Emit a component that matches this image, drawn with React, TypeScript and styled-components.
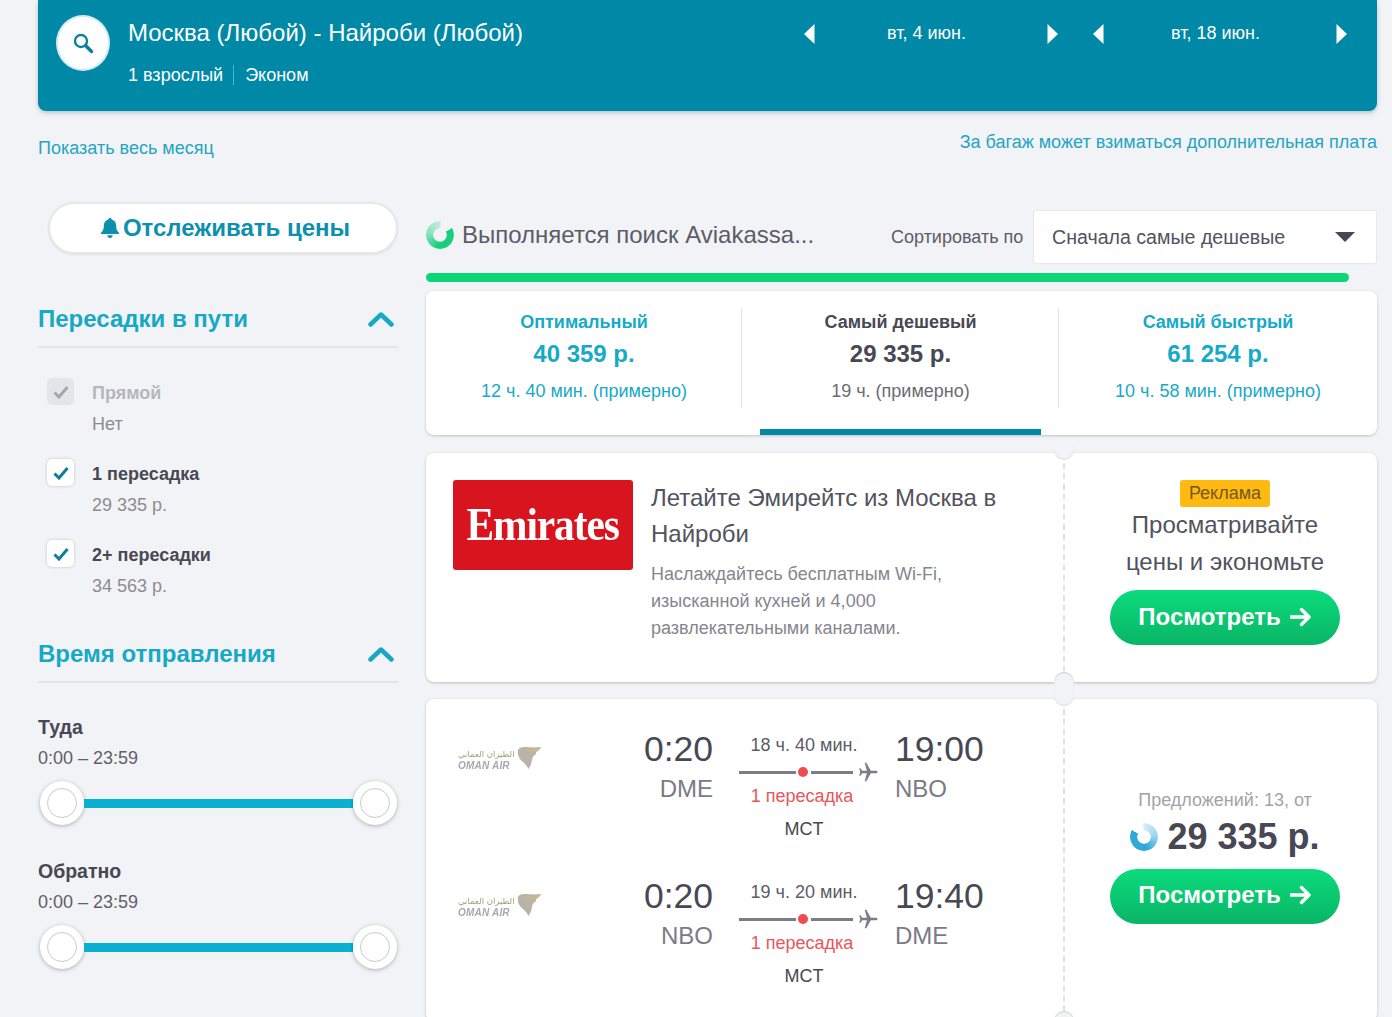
import React from 'react'
import styled, {createGlobalStyle} from 'styled-components'

const GlobalStyle = createGlobalStyle`
    html, body {
        margin: 0;
        padding: 0;
        background: #f2f3f6;
    }
    * {
        box-sizing: border-box;
    }
`

const Page = styled.div`
    width: 1392px;
    height: 1017px;
    overflow: hidden;
    padding: 0 15px 0 38px;
    font-family: 'Liberation Sans', Arial, sans-serif;
    color: #474853;
    background: #f2f3f6;
`

const Header = styled.header`
    height: 111px;
    display: flex;
    justify-content: space-between;
    padding: 15px 30px 0 18px;
    background: #0089a7;
    border-radius: 0 0 8px 8px;
    box-shadow: 0 2px 4px rgba(0, 60, 80, 0.25);
    color: #fff;
`

const RouteBox = styled.div`
    display: flex;
    gap: 18px;
`

const SearchCircle = styled.div`
    width: 54px;
    height: 56px;
    display: flex;
    align-items: center;
    justify-content: center;
    background: #fff;
    border: 2px solid #d5eaf0;
    border-radius: 50%;
`

const RouteTitle = styled.div`
    font-size: 24px;
    line-height: 36px;
`

const RouteMeta = styled.div`
    display: flex;
    align-items: center;
    margin-top: 14px;
    font-size: 18px;
    line-height: 20px;
`

const MetaPart = styled.span`
    & + & {
        margin-left: 10px;
        padding-left: 11px;
        border-left: 1px solid #4db3c9;
    }
`

const DatesBox = styled.div`
    display: flex;
    gap: 35px;
    height: 38px;
`

const DateNav = styled.div`
    width: 254px;
    display: flex;
    align-items: center;
    justify-content: space-between;
    font-size: 18px;
`

const DateText = styled.span`
    margin: -2px 9px 0 0;
`

const Links = styled.div`
    height: 91px;
    display: flex;
    justify-content: space-between;
    font-size: 18px;
    color: #24a5c2;
`

const MonthLink = styled.a`
    margin-top: 27px;
    line-height: 20px;
`

const BaggageLink = styled.a`
    margin-top: 21px;
    line-height: 20px;
`

const Columns = styled.div`
    display: flex;
    gap: 28px;
`

const Sidebar = styled.aside`
    width: 360px;
    flex-shrink: 0;
`

const TrackButton = styled.button`
    width: 350px;
    height: 52px;
    margin-left: 10px;
    display: flex;
    align-items: center;
    justify-content: center;
    gap: 3px;
    padding: 0 0 0 4px;
    background: #fff;
    border: 2px solid #e6e7eb;
    border-radius: 26px;
    box-shadow: 0 1px 2px rgba(0, 0, 0, 0.08);
    font: bold 24px 'Liberation Sans', Arial, sans-serif;
    color: #0d90ae;
`

const FilterHead = styled.div<{$top: number}>`
    height: 51px;
    margin-top: ${(p) => p.$top}px;
    display: flex;
    align-items: center;
    justify-content: space-between;
    padding: 0 4px 5px 0;
    border-bottom: 2px solid #e3e4e9;
    font-size: 24px;
    font-weight: bold;
    color: #17a8c6;
`

const StopList = styled.div`
    display: flex;
    flex-direction: column;
    gap: 25px;
    margin-top: 30px;
    padding-left: 9px;
`

const StopRow = styled.div`
    display: flex;
    gap: 18px;
`

const CheckBox = styled.div<{$off?: boolean}>`
    width: 27px;
    height: 27px;
    flex-shrink: 0;
    display: flex;
    align-items: center;
    justify-content: center;
    background: ${(p) => (p.$off ? '#e4e5e9' : '#fff')};
    border-radius: 5px;
    box-shadow: ${(p) => (p.$off ? 'none' : '0 0 3px rgba(0, 0, 0, 0.22)')};
`

const StopText = styled.div`
    display: flex;
    flex-direction: column;
    gap: 11px;
    font-size: 18px;
    line-height: 20px;
    padding-top: 5px;
`

const StopName = styled.span<{$off?: boolean}>`
    font-weight: bold;
    color: ${(p) => (p.$off ? '#b6b7bc' : '#474853')};
`

const StopPrice = styled.span`
    color: #8b8c93;
`

const TimeList = styled.div`
    margin-top: 32px;
    display: flex;
    flex-direction: column;
    gap: 32px;
`

const TimeName = styled.div`
    font-size: 19.5px;
    line-height: 24px;
    font-weight: bold;
`

const TimeRange = styled.div`
    margin-top: 7px;
    font-size: 18px;
    line-height: 24px;
    color: #5f6069;
`

const Slider = styled.div`
    display: flex;
    align-items: center;
    height: 48px;
    margin-top: 9px;
    padding: 0 1px 0 2px;
`

const Thumb = styled.div`
    width: 44px;
    height: 44px;
    flex-shrink: 0;
    display: flex;
    align-items: center;
    justify-content: center;
    background: #fff;
    border-radius: 50%;
    box-shadow: 0 1px 4px rgba(0, 0, 0, 0.28);
`

const ThumbInner = styled.div`
    width: 30px;
    height: 30px;
    border: 1px solid #c9cacd;
    border-radius: 50%;
`

const SliderBar = styled.div`
    flex: 1;
    height: 9px;
    background: #0ab0d3;
`

const Main = styled.main`
    width: 951px;
    padding-top: 8px;
`

const SearchRow = styled.div`
    height: 54px;
    display: flex;
    align-items: center;
`

const SearchStatus = styled.div`
    width: 465px;
    display: flex;
    align-items: center;
    gap: 8px;
    margin-bottom: 4px;
`

const Spinner = styled.div<{$color: string; $flip?: boolean}>`
    width: 28px;
    height: 28px;
    flex-shrink: 0;
    border-radius: 50%;
    background: conic-gradient(from 60deg, ${(p) => p.$color} 0deg, ${(p) => p.$color} 130deg, ${(p) => p.$color}77 220deg, ${(p) => p.$color}33 300deg, transparent 306deg);
    -webkit-mask: radial-gradient(circle, transparent 32%, #000 36%);
    mask: radial-gradient(circle, transparent 32%, #000 36%);
    transform: ${(p) => (p.$flip ? 'scaleX(-1)' : 'none')};
`

const SearchText = styled.div`
    font-size: 24px;
    color: #5b5c66;
    white-space: nowrap;
`

const SortLabel = styled.div`
    width: 143px;
    font-size: 18px;
    color: #5b5c66;
`

const SortSelect = styled.div`
    width: 342px;
    height: 52px;
    display: flex;
    align-items: center;
    justify-content: space-between;
    padding: 0 21px 0 18px;
    background: #fff;
    border-radius: 2px;
    box-shadow: 0 0 2px rgba(0, 0, 0, 0.15);
    font-size: 19.6px;
    color: #52535d;
`

const SortArrow = styled.div`
    width: 0;
    height: 0;
    border-left: 10px solid transparent;
    border-right: 10px solid transparent;
    border-top: 10px solid #474853;
`

const Progress = styled.div`
    width: 923px;
    height: 9px;
    margin-top: 9px;
    background: #0cd677;
    border-radius: 5px;
`

const Tabs = styled.div`
    height: 144px;
    margin-top: 9px;
    display: grid;
    grid-template-columns: 316px 317px 318px;
    background: #fff;
    border-radius: 8px;
    box-shadow: 0 1px 3px rgba(0, 0, 0, 0.2);
`

const Tab = styled.div<{$active?: boolean}>`
    position: relative;
    height: 144px;
    padding-top: 21px;
    text-align: center;
    color: ${(p) => (p.$active ? '#474853' : '#16a9c8')};
    &:not(:first-child)::before {
        content: '';
        position: absolute;
        left: -1px;
        top: 17px;
        height: 100px;
        border-left: 1px solid #e4e5e9;
    }
    ${(p) =>
        p.$active &&
        `&::after {
        content: '';
        position: absolute;
        left: 18px;
        right: 18px;
        bottom: 0;
        height: 6px;
        background: #0089a7;
    }`}
`

const TabTitle = styled.div`
    font-size: 18px;
    line-height: 20px;
    font-weight: bold;
`

const TabPrice = styled.div`
    margin-top: 4px;
    font-size: 24px;
    line-height: 36px;
    font-weight: bold;
`

const TabTime = styled.div<{$active?: boolean}>`
    margin-top: 9px;
    font-size: 18px;
    line-height: 20px;
    color: ${(p) => (p.$active ? '#6a6b74' : '#16a9c8')};
`

const Card = styled.section<{$height: number; $top: number}>`
    position: relative;
    height: ${(p) => p.$height}px;
    margin-top: ${(p) => p.$top}px;
    display: grid;
    grid-template-columns: 637px 314px;
    background: #fff;
    border-radius: 8px;
    box-shadow: 0 1px 3px rgba(0, 0, 0, 0.22);
`

const Notch = styled.div<{$bottom?: boolean}>`
    position: absolute;
    left: 628px;
    ${(p) => (p.$bottom ? 'bottom: -10px;' : 'top: -13px;')}
    width: 20px;
    height: 20px;
    background: #f2f3f6;
    border-radius: 50%;
    box-shadow: ${(p) => (p.$bottom ? 'inset 0 1px 1px rgba(0, 0, 0, 0.16)' : 'inset 0 -1px 1px rgba(0, 0, 0, 0.1)')};
`

const AdLeft = styled.div`
    display: flex;
    gap: 18px;
    padding: 27px 40px 0 27px;
`

const EmiratesLogo = styled.div`
    width: 180px;
    height: 90px;
    flex-shrink: 0;
    display: flex;
    align-items: center;
    justify-content: center;
    padding-bottom: 2px;
    background: #d8141f;
    border-radius: 3px;
    color: #fff;
    font: bold 46px 'Liberation Serif', 'Times New Roman', serif;
    letter-spacing: -1.2px;
`

const EmiratesWord = styled.span`
    display: block;
    transform: scaleX(0.9);
`

const AdTitle = styled.div`
    font-size: 24px;
    line-height: 36px;
    color: #52535d;
`

const AdDesc = styled.div`
    margin-top: 9px;
    font-size: 18px;
    line-height: 27px;
    color: #85868d;
`

const Side = styled.div<{$center?: boolean}>`
    display: flex;
    flex-direction: column;
    align-items: center;
    justify-content: ${(p) => (p.$center ? 'center' : 'flex-start')};
    padding: ${(p) => (p.$center ? '0 0 8px 8px' : '27px 0 0 8px')};
    border-left: 2px dashed #e0e1e6;
`

const AdBadge = styled.div`
    width: 90px;
    height: 27px;
    display: flex;
    align-items: center;
    justify-content: center;
    background: #ffb911;
    border-radius: 3px;
    font-size: 18px;
    color: #74591a;
`

const AdSlogan = styled.div`
    margin-top: -1px;
    font-size: 24px;
    line-height: 37px;
    text-align: center;
    color: #52535d;
`

const GoButton = styled.button<{$top: number}>`
    width: 230px;
    height: 55px;
    margin-top: ${(p) => p.$top}px;
    display: flex;
    align-items: center;
    justify-content: center;
    gap: 9px;
    padding: 0 0 2px;
    background: linear-gradient(#0bdb7c, #0ab566);
    border: 0;
    border-radius: 28px;
    font: bold 24px 'Liberation Sans', Arial, sans-serif;
    color: #fff;
`

const OfferCount = styled.div`
    font-size: 18px;
    line-height: 22px;
    color: #a2a3a9;
`

const OfferPrice = styled.div`
    display: flex;
    align-items: center;
    gap: 9px;
    margin-top: 4px;
    font-size: 36px;
    line-height: 44px;
    font-weight: bold;
`

const Segments = styled.div`
    display: flex;
    flex-direction: column;
    gap: 27px;
    padding: 28px 0 0 32px;
`

const Segment = styled.div`
    height: 120px;
    display: flex;
`

const OmanLogo = styled.div`
    width: 84px;
    height: 26px;
    margin-top: 18px;
    display: flex;
    align-items: center;
    filter: blur(0.4px);
`

const OmanWords = styled.div`
    width: 59px;
    flex-shrink: 0;
    display: flex;
    flex-direction: column;
    align-items: flex-start;
    padding-top: 3px;
`

const OmanArabic = styled.span`
    font: 8.5px/12px 'DejaVu Sans', sans-serif;
    color: #a39d76;
    white-space: nowrap;
`

const OmanLatin = styled.span`
    font: italic bold 10px/11px 'Liberation Sans', Arial, sans-serif;
    letter-spacing: 0.2px;
    color: #a7a8ae;
    white-space: nowrap;
`

const Edge = styled.div<{$right?: boolean}>`
    width: ${(p) => (p.$right ? '100px' : '90px')};
    margin-left: ${(p) => (p.$right ? '16px' : '81px')};
    text-align: ${(p) => (p.$right ? 'left' : 'right')};
`

const Clock = styled.div`
    font-size: 35.5px;
    line-height: 44px;
    color: #474853;
`

const Airport = styled.div`
    font-size: 24px;
    line-height: 36px;
    color: #7a7b85;
`

const Middle = styled.div`
    width: 140px;
    margin-left: 26px;
    text-align: center;
    font-size: 18px;
`

const Duration = styled.div`
    width: 130px;
    padding-top: 7px;
    line-height: 22px;
    color: #5b5c66;
`

const RouteLine = styled.div`
    display: flex;
    align-items: center;
    height: 24px;
    margin-top: 4px;
`

const LinePart = styled.div<{$width: number}>`
    width: ${(p) => p.$width}px;
    height: 3px;
    background: #7c7d87;
`

const StopDot = styled.div`
    width: 10px;
    height: 10px;
    margin: 0 3px 0 2px;
    flex-shrink: 0;
    background: #ee4a4f;
    border-radius: 50%;
`

const PlaneMark = styled.span`
    display: flex;
    margin-left: 5px;
`

const StopCount = styled.div`
    width: 126px;
    line-height: 24px;
    color: #e8565a;
`

const StopCode = styled.div`
    width: 130px;
    margin-top: 9px;
    line-height: 24px;
    color: #474853;
`

const Triangle = ({flip}: {flip?: boolean}) => (
    <svg width="11" height="20" viewBox="0 0 11 20" style={flip ? {transform: 'scaleX(-1)'} : undefined}>
        <path d="M10.5 0v20L0 10z" fill="#fff" />
    </svg>
)

const SearchIcon = () => (
    <svg width="24" height="24" viewBox="0 0 24 24" fill="none" stroke="#0d7f9b">
        <circle cx="10" cy="10" r="6" strokeWidth="2.4" />
        <path d="M14.5 14.5l6 6" strokeWidth="3.4" strokeLinecap="round" />
    </svg>
)

const BellIcon = () => (
    <svg width="20" height="22" viewBox="0 0 20 22" fill="#0d90ae">
        <path d="M10 1c1 0 1.7.7 1.7 1.6 3 .8 4.5 3.2 4.5 6.4 0 3.4 1 5 2.8 6.7V17H1v-1.3C2.8 14 3.8 12.4 3.8 9c0-3.2 1.5-5.6 4.5-6.4C8.3 1.7 9 1 10 1z" />
        <path d="M7.4 18.3h5.2a2.6 2.6 0 0 1-5.200 0z" />
    </svg>
)

const Chevron = () => (
    <svg width="26" height="16" viewBox="0 0 26 16" fill="none">
        <path d="M2.5 13.5L13 3.5l10.5 10" stroke="#17a8c6" strokeWidth="4.5" strokeLinecap="round" strokeLinejoin="round" />
    </svg>
)

const Check = ({color}: {color: string}) => (
    <svg width="16" height="14" viewBox="0 0 16 14" fill="none">
        <path d="M1.5 7.5l4.500 4.500 8.500-10" stroke={color} strokeWidth="3" />
    </svg>
)

const GoArrow = () => (
    <svg width="22" height="20" viewBox="0 0 22 20" fill="none" stroke="#fff" strokeWidth="3.4">
        <path d="M1 10h18M11.5 2.500L19 10l-7.500 7.500" strokeLinecap="round" strokeLinejoin="round" />
    </svg>
)

const Plane = () => (
    <svg width="20" height="20" viewBox="0 0 20 20" fill="#7c7d87">
        <path d="M19.5 10c0-.9-.8-1.3-1.7-1.3h-5L8.3.8H6.700l2.200 7.900H4.200L2.500 6.300H1.200L2.300 10l-1.100 3.700h1.300l1.700-2.400h4.700l-2.200 7.900h1.600l4.500-7.900h5c.9 0 1.700-.4 1.700-1.300z" />
    </svg>
)

const OmanWing = () => (
    <svg width="25" height="24" viewBox="0 0 25 24">
        <path d="M1 4c1-2.500 4-3.500 8-3 5 .5 10 .5 15 0-1 2.500-2.500 4-5 5 .5 1 .2 2-1 3-2 1-2.500 2.500-3 5-.5 3.500-1.500 6-3.500 9-1-2.500-3-4.500-5.500-7C2 13 0 8.500 1 4z" fill="#b8b5a8" />
        <path d="M8 3.500c5 .8 10 .2 15-1.800-1 2-3.500 3.500-7 4-3 .3-6-.5-8-2.200z" fill="#d4b97e" />
    </svg>
)

const stops = [
    {name: 'Прямой', price: 'Нет', off: true},
    {name: '1 пересадка', price: '29 335 р.'},
    {name: '2+ пересадки', price: '34 563 р.'},
]

const times = [
    {name: 'Туда', range: '0:00 – 23:59'},
    {name: 'Обратно', range: '0:00 – 23:59'},
]

const tabs = [
    {title: 'Оптимальный', price: '40 359 р.', time: '12 ч. 40 мин. (примерно)'},
    {title: 'Самый дешевый', price: '29 335 р.', time: '19 ч. (примерно)', active: true},
    {title: 'Самый быстрый', price: '61 254 р.', time: '10 ч. 58 мин. (примерно)'},
]

const segments = [
    {from: '0:20', fromCode: 'DME', duration: '18 ч. 40 мин.', to: '19:00', toCode: 'NBO'},
    {from: '0:20', fromCode: 'NBO', duration: '19 ч. 20 мин.', to: '19:40', toCode: 'DME'},
]

const App: React.FC = () => {
    return (
        <Page>
            <GlobalStyle />
            <Header>
                <RouteBox>
                    <SearchCircle>
                        <SearchIcon />
                    </SearchCircle>
                    <div>
                        <RouteTitle>Москва (Любой) - Найроби (Любой)</RouteTitle>
                        <RouteMeta>
                            <MetaPart>1 взрослый</MetaPart>
                            <MetaPart>Эконом</MetaPart>
                        </RouteMeta>
                    </div>
                </RouteBox>
                <DatesBox>
                    <DateNav>
                        <Triangle />
                        <DateText>вт, 4 июн.</DateText>
                        <Triangle flip />
                    </DateNav>
                    <DateNav>
                        <Triangle />
                        <DateText>вт, 18 июн.</DateText>
                        <Triangle flip />
                    </DateNav>
                </DatesBox>
            </Header>
            <Links>
                <MonthLink>Показать весь месяц</MonthLink>
                <BaggageLink>За багаж может взиматься дополнительная плата</BaggageLink>
            </Links>
            <Columns>
                <Sidebar>
                    <TrackButton>
                        <BellIcon />
                        Отслеживать цены
                    </TrackButton>
                    <FilterHead $top={43}>
                        Пересадки в пути
                        <Chevron />
                    </FilterHead>
                    <StopList>
                        {stops.map((stop) => (
                            <StopRow key={stop.name}>
                                <CheckBox $off={stop.off}>
                                    <Check color={stop.off ? '#a6a7ad' : '#0d7f9b'} />
                                </CheckBox>
                                <StopText>
                                    <StopName $off={stop.off}>{stop.name}</StopName>
                                    <StopPrice>{stop.price}</StopPrice>
                                </StopText>
                            </StopRow>
                        ))}
                    </StopList>
                    <FilterHead $top={36}>
                        Время отправления
                        <Chevron />
                    </FilterHead>
                    <TimeList>
                        {times.map((time) => (
                            <div key={time.name}>
                                <TimeName>{time.name}</TimeName>
                                <TimeRange>{time.range}</TimeRange>
                                <Slider>
                                    <Thumb>
                                        <ThumbInner />
                                    </Thumb>
                                    <SliderBar />
                                    <Thumb>
                                        <ThumbInner />
                                    </Thumb>
                                </Slider>
                            </div>
                        ))}
                    </TimeList>
                </Sidebar>
                <Main>
                    <SearchRow>
                        <SearchStatus>
                            <Spinner $color="#18cf7c" />
                            <SearchText>Выполняется поиск Aviakassa...</SearchText>
                        </SearchStatus>
                        <SortLabel>Сортировать по</SortLabel>
                        <SortSelect>
                            Сначала самые дешевые
                            <SortArrow />
                        </SortSelect>
                    </SearchRow>
                    <Progress />
                    <Tabs>
                        {tabs.map((tab) => (
                            <Tab key={tab.title} $active={tab.active}>
                                <TabTitle>{tab.title}</TabTitle>
                                <TabPrice>{tab.price}</TabPrice>
                                <TabTime $active={tab.active}>{tab.time}</TabTime>
                            </Tab>
                        ))}
                    </Tabs>
                    <Card $height={229} $top={18}>
                        <Notch />
                        <Notch $bottom />
                        <AdLeft>
                            <EmiratesLogo>
                                <EmiratesWord>Emirates</EmiratesWord>
                            </EmiratesLogo>
                            <div>
                                <AdTitle>Летайте Эмирейтс из Москва в Найроби</AdTitle>
                                <AdDesc>Наслаждайтесь бесплатным Wi-Fi, изысканной кухней и 4,000 развлекательными каналами.</AdDesc>
                            </div>
                        </AdLeft>
                        <Side>
                            <AdBadge>Реклама</AdBadge>
                            <AdSlogan>
                                Просматривайте
                                <br />
                                цены и экономьте
                            </AdSlogan>
                            <GoButton $top={10}>
                                Посмотреть
                                <GoArrow />
                            </GoButton>
                        </Side>
                    </Card>
                    <Card $height={322} $top={17}>
                        <Notch />
                        <Notch $bottom />
                        <Segments>
                            {segments.map((segment) => (
                                <Segment key={segment.duration}>
                                    <OmanLogo>
                                        <OmanWords>
                                            <OmanArabic>الطيران العماني</OmanArabic>
                                            <OmanLatin>OMAN AIR</OmanLatin>
                                        </OmanWords>
                                        <OmanWing />
                                    </OmanLogo>
                                    <Edge>
                                        <Clock>{segment.from}</Clock>
                                        <Airport>{segment.fromCode}</Airport>
                                    </Edge>
                                    <Middle>
                                        <Duration>{segment.duration}</Duration>
                                        <RouteLine>
                                            <LinePart $width={57} />
                                            <StopDot />
                                            <LinePart $width={42} />
                                            <PlaneMark>
                                                <Plane />
                                            </PlaneMark>
                                        </RouteLine>
                                        <StopCount>1 пересадка</StopCount>
                                        <StopCode>MCT</StopCode>
                                    </Middle>
                                    <Edge $right>
                                        <Clock>{segment.to}</Clock>
                                        <Airport>{segment.toCode}</Airport>
                                    </Edge>
                                </Segment>
                            ))}
                        </Segments>
                        <Side $center>
                            <OfferCount>Предложений: 13, от</OfferCount>
                            <OfferPrice>
                                <Spinner $color="#2fa9d6" $flip />
                                29 335 р.
                            </OfferPrice>
                            <GoButton $top={10}>
                                Посмотреть
                                <GoArrow />
                            </GoButton>
                        </Side>
                    </Card>
                </Main>
            </Columns>
        </Page>
    )
}

export default App
